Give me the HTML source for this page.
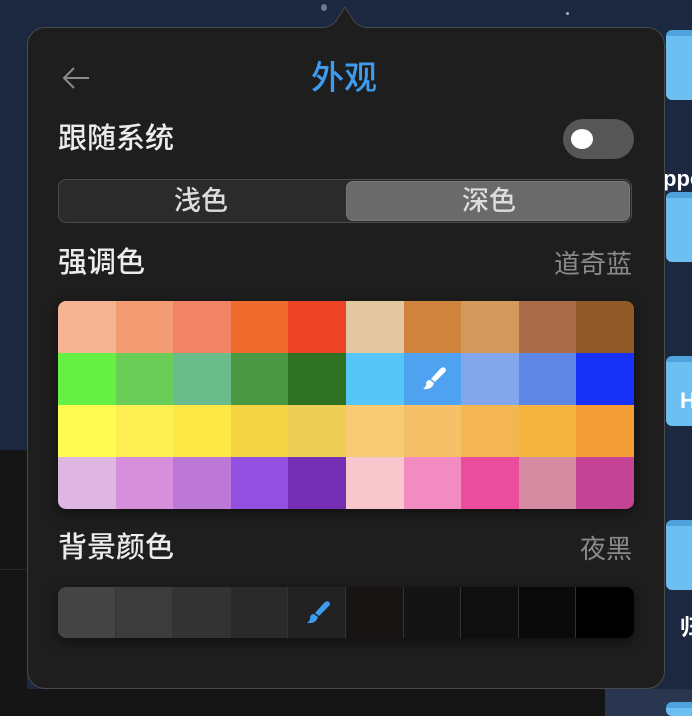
<!DOCTYPE html>
<html style="overflow:hidden;width:692px;height:716px"><head><meta charset="utf-8"><style>
*{margin:0;padding:0;box-sizing:border-box}
body{width:692px;height:716px;overflow:hidden;background:#1c2740;font-family:"Liberation Sans","Noto Sans CJK SC",sans-serif;position:relative}
.abs{position:absolute}
.folder{position:absolute;left:666px;width:40px;height:70px;background:#6cbff0;border-radius:6px;border-top:6px solid #4fa3dc}
.panel{position:absolute;left:27px;top:27px;width:638px;height:662px;background:#1e1e1e;border:1px solid #4a4a4a;border-radius:18px}
.t{position:absolute;color:#ececec;font-size:29px;line-height:32px;font-weight:500;white-space:nowrap}
.grid{position:absolute;left:58px;top:301px;width:576px;height:208px;border-radius:8px;overflow:hidden;display:grid;grid-template-columns:repeat(10,1fr);grid-template-rows:repeat(4,1fr);box-shadow:0 4px 14px rgba(0,0,0,.5)}
.bg{position:absolute;left:58px;top:587px;width:576px;height:51px;border-radius:8px;overflow:hidden;display:grid;grid-template-columns:repeat(10,1fr);box-shadow:0 4px 14px rgba(0,0,0,.5)}
.bg div{border-right:1px solid #333}
.grid div{position:relative}
</style></head><body>
<div class="abs" style="left:0;top:450px;width:27px;height:266px;background:#151515"></div>
<div class="abs" style="left:0;top:569px;width:27px;height:1px;background:#2a2a2a"></div>
<div class="abs" style="left:27px;top:689px;width:578px;height:27px;background:#151515"></div>
<div class="abs" style="left:605px;top:689px;width:87px;height:27px;background:#2a3550"></div>
<div class="folder" style="top:30px"></div>
<div class="folder" style="top:192px"></div>
<div class="folder" style="top:356px"></div>
<div class="folder" style="top:520px"></div>
<div class="folder" style="top:702px;height:14px"></div>
<div class="abs" style="left:663px;top:166px;color:#fff;font-weight:bold;font-size:22px">ppo</div>
<div class="abs" style="left:680px;top:388px;color:#fff;font-weight:bold;font-size:22px">H</div>
<div class="abs" style="left:680px;top:610px;color:#fff;font-weight:bold;font-size:22px">归</div>
<div class="abs" style="left:321px;top:4px;width:6px;height:7px;border-radius:50%;background:#6a7a95"></div>
<div class="abs" style="left:566px;top:12px;width:3px;height:3px;border-radius:50%;background:#aab"></div>
<div class="panel"></div>
<svg class="abs" style="left:300px;top:3px" width="90" height="30"><path d="M10 26 Q30 26 36 18 L45 4 L54 18 Q60 26 80 26 Z" fill="#1e1e1e" stroke="#4a4a4a" stroke-width="1"/><rect x="0" y="25" width="90" height="5" fill="#1e1e1e"/></svg>
<svg class="abs" style="left:60px;top:66px" width="32" height="24"><path d="M29 12H4M14 2L4 12L14 22" fill="none" stroke="#8a8a8a" stroke-width="2"/></svg>
<div class="t" style="left:311px;top:60px;color:#3d9bf0;font-size:33px;line-height:36px">外观</div>
<div class="t" style="left:58px;top:123px">跟随系统</div>
<div class="abs" style="left:563px;top:119px;width:71px;height:40px;border-radius:20px;background:#565656"><div class="abs" style="left:8px;top:10px;width:22px;height:20px;border-radius:50%;background:#fff"></div></div>
<div class="abs" style="left:58px;top:179px;width:574px;height:44px;border-radius:8px;background:#2b2b2b;border:1px solid #4a4a4a"></div>
<div class="abs" style="left:346px;top:181px;width:284px;height:40px;border-radius:7px;background:#6a6a6a;border:1px solid #777"></div>
<div class="t" style="left:174px;top:185px;color:#ddd;font-size:27px">浅色</div>
<div class="t" style="left:462px;top:185px;color:#ddd;font-size:27px">深色</div>
<div class="t" style="left:58px;top:247px">强调色</div>
<div class="t" style="left:554px;top:248px;color:#8a8a8a;font-size:26px;font-weight:400">道奇蓝</div>
<div class="grid">
<div style="background:#f5b494"></div><div style="background:#f39c74"></div><div style="background:#f18465"></div><div style="background:#ef6a2d"></div><div style="background:#ec4324"></div><div style="background:#e3c7a0"></div><div style="background:#cf833c"></div><div style="background:#d29a5c"></div><div style="background:#aa6c48"></div><div style="background:#8f5a27"></div>
<div style="background:#66f044"></div><div style="background:#69cd58"></div><div style="background:#6abd8a"></div><div style="background:#4a9842"></div><div style="background:#2e7122"></div><div style="background:#56c6f9"></div><div style="background:#4ea2f0"><svg style="position:absolute;left:14px;top:12px" width="30" height="28" viewBox="0 0 30 28"><path d="M27 3 Q25 1 22 4 L13 14 L17 17 L27 7 Q29 5 27 3Z M12 15 L16 18 Q14 25 5 24 Q9 21 8 18 Q9 15 12 15Z" fill="#fff"/></svg></div><div style="background:#82a7ea"></div><div style="background:#5e86e4"></div><div style="background:#1731f8"></div>
<div style="background:#fffb50"></div><div style="background:#fdef52"></div><div style="background:#fbe845"></div><div style="background:#f5d443"></div><div style="background:#efce57"></div><div style="background:#f7cb73"></div><div style="background:#f5c067"></div><div style="background:#f4b653"></div><div style="background:#f5b43d"></div><div style="background:#f49e38"></div>
<div style="background:#dfb5e1"></div><div style="background:#d78edb"></div><div style="background:#bd78d7"></div><div style="background:#9350e0"></div><div style="background:#742fb5"></div><div style="background:#f8c6cd"></div><div style="background:#f28bbf"></div><div style="background:#ea4d9c"></div><div style="background:#d78ba2"></div><div style="background:#c44394"></div>
</div>
<div class="t" style="left:58px;top:532px">背景颜色</div>
<div class="t" style="left:580px;top:533px;color:#8a8a8a;font-size:26px;font-weight:400">夜黑</div>
<div class="bg">
<div style="background:#444"></div><div style="background:#3c3c3c"></div><div style="background:#333"></div><div style="background:#2a2a2a"></div><div style="background:#222;position:relative"><svg style="position:absolute;left:14px;top:12px" width="30" height="28" viewBox="0 0 30 28"><path d="M27 3 Q25 1 22 4 L13 14 L17 17 L27 7 Q29 5 27 3Z M12 15 L16 18 Q14 25 5 24 Q9 21 8 18 Q9 15 12 15Z" fill="#3d9bf0"/></svg></div><div style="background:#181414"></div><div style="background:#141414"></div><div style="background:#0f0f0f"></div><div style="background:#0a0a0a"></div><div style="background:#000;border:none"></div>
</div>
</body></html>
